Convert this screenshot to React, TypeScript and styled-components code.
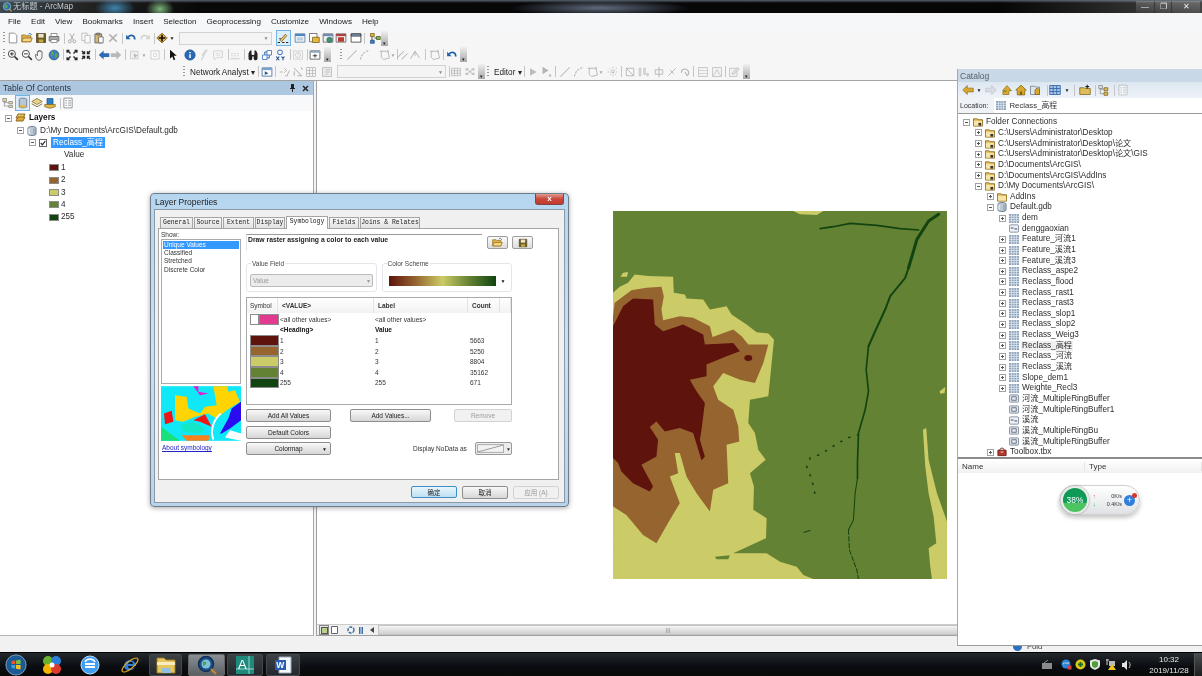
import React from "react";
import styled, { createGlobalStyle } from "styled-components";

const Global = createGlobalStyle`
  html, body { margin: 0; padding: 0; background: #fff; overflow: hidden; }
  * { box-sizing: border-box; }
`;
const SANS = `"Liberation Sans", "Noto Sans CJK SC", sans-serif`;

const Page = styled.div`
  position: relative; width: 1202px; height: 676px; overflow: hidden; display: flex; flex-direction: column;
  font-family: ${SANS}; color: #222; background: #f3f3f3; filter: blur(0.35px);
`;
const TitleBar = styled.div`
  height: 13px; display: flex; align-items: center; padding-left: 2px; gap: 1px; color: #c9ccd0; font-size: 8.2px; line-height: 10px;
  background:
    linear-gradient(180deg, rgba(150,170,190,.55) 0, rgba(0,0,0,0) 3px),
    radial-gradient(ellipse 20px 10px at 115px 8px, rgba(70,150,200,.85), transparent),
    radial-gradient(ellipse 14px 10px at 160px 9px, rgba(150,220,150,.8), transparent),
    radial-gradient(ellipse 90px 8px at 600px 8px, rgba(125,140,165,.75), transparent),
    linear-gradient(90deg, #3a4a50 0, #222 90px, #080808 200px, #060606 1000px, #444 1202px);
`;
const TitleText = styled.span` flex: 1; `;
const WinBtns = styled.div` display: flex; height: 12px; margin-right: 2px; gap: 1px; `;
const WinBtn = styled.div<{ $w: number }>`
  width: ${p => p.$w}px; display: flex; align-items: center; justify-content: center; color: #eee; font-size: 8px;
  background: linear-gradient(180deg, rgba(255,255,255,.22), rgba(255,255,255,.06)); border-radius: 0 0 2px 2px;
`;
const MenuBar = styled.div` height: 17px; display: flex; align-items: center; padding-left: 3px; background: #f6f7f8; font-size: 8.1px; color: #1a1a1a; `;
const Menu = styled.span` padding: 0 5px; `;
const Toolbars = styled.div` height: 51px; background: #f6f6f6; border-bottom: 1px solid #a4a4a4; display: flex; flex-direction: column; `;
const ToolRow = styled.div` height: 16.67px; display: flex; align-items: center; `;
const Cell = styled.div<{ $ml: number; $w: number; $on?: boolean; $off?: boolean }>`
  flex: none; margin-left: ${p => p.$ml}px; width: ${p => p.$w}px; height: 14px;
  display: flex; align-items: center; justify-content: center;
  ${p => p.$on ? "outline: 1px solid #6fb3e6; background: #dcecf9;" : ""}
  ${p => p.$off ? "opacity: .45; filter: grayscale(1);" : ""}
`;
const SepLine = styled.div<{ $ml: number }>` flex: none; margin-left: ${p => p.$ml}px; width: 1px; height: 11px; background: #c5c5c5; `;
const GripBar = styled.div<{ $ml: number }>` flex: none; margin-left: ${p => p.$ml}px; width: 2px; height: 12px; background: repeating-linear-gradient(180deg, #999 0 1px, transparent 1px 3px); `;
const HandleBar = styled.div<{ $ml: number }>`
  flex: none; margin-left: ${p => p.$ml}px; width: 7px; height: 15px; display: flex; align-items: flex-end; justify-content: center;
  background: linear-gradient(180deg, #f0f0f0, #a8a8a8); color: #222; font-size: 5px; line-height: 6px;
`;
const Combo = styled.div<{ $ml: number; $w: number }>`
  flex: none; margin-left: ${p => p.$ml}px; width: ${p => p.$w}px; height: 13px; background: #f4f4f4; border: 1px solid #d2d2d2;
  display: flex; align-items: center; justify-content: flex-end; padding-right: 2px; color: #888; font-size: 5px;
`;
const ToolLabel = styled.div<{ $ml: number; $w: number }>` flex: none; margin-left: ${p => p.$ml}px; width: ${p => p.$w}px; font-size: 8.2px; white-space: nowrap; color: #222; `;
const Caret = styled.div<{ $ml: number; $off?: boolean }>` flex: none; margin-left: ${p => p.$ml}px; width: 6px; font-size: 5px; text-align: center; color: ${p => p.$off ? "#aaa" : "#222"}; `;

const Main = styled.div` height: 555px; display: flex; `;
const Toc = styled.div` width: 314px; display: flex; flex-direction: column; background: #fff; border-right: 1px solid #a9a9a9; border-bottom: 1px solid #b5b5b5; `;
const TocTitle = styled.div` height: 14px; flex: none; display: flex; align-items: center; padding: 0 3px; background: #aec7e1; font-size: 8.5px; color: #2a3440; `;
const TocTitleText = styled.span` flex: 1; `;
const TocIcons = styled.div` display: flex; gap: 6px; margin-right: 1px; align-items: center; `;
const PanelTools = styled.div<{ $bg?: string }>` height: 16px; flex: none; display: flex; align-items: center; background: ${p => p.$bg || "#f7f9fb"}; `;
const TocTree = styled.div` flex: 1; padding-top: 1px; font-size: 8.2px; `;
const TreeRow = styled.div<{ $pl: number; $h: number }>` height: ${p => p.$h}px; line-height: 10px; display: flex; align-items: center; padding-left: ${p => p.$pl}px; white-space: nowrap; color: #2c2c2c; `;
const ExpSlot = styled.span` width: 7px; height: 7px; flex: none; display: flex; margin-right: 3px; `;
const IconSlot = styled.span<{ $w: number }>` width: ${p => p.$w}px; flex: none; display: flex; align-items: center; justify-content: center; margin-right: 3px; `;
const Bold = styled.span` font-weight: 700; color: #111; `;
const Picked = styled.span` background: #3399ff; color: #fff; padding: 0 2px; margin-left: 1px; height: 11px; line-height: 11px; `;
const Soft = styled.span` background: #f0f0f0; padding: 0 1px; margin-left: -1px; `;
const Swatch = styled.span<{ $c: string }>` width: 10px; height: 7px; flex: none; background: ${p => p.$c}; border: 1px solid #8c8c8c; margin-right: 2px; `;

const MapView = styled.div` width: 642px; margin-left: 2px; display: flex; flex-direction: column; background: #fff; border-left: 1px solid #a0a0a0; border-bottom: 1px solid #a0a0a0; `;
const MapCanvas = styled.div` flex: 1; padding: 130px 0 0 296px; `;
const MapBar = styled.div` height: 11px; display: flex; align-items: center; padding-left: 2px; background: #f0f0f0; border-top: 1px solid #ccc; `;
const MapBtn = styled.div<{ $ml?: number; $on?: boolean }>`
  width: 10px; height: 10px; flex: none; margin-left: ${p => p.$ml || 0}px; display: flex; align-items: center; justify-content: center;
  ${p => p.$on ? "border: 1px solid #888; background: #e4e4e4;" : ""}
`;
const ScrollTrack = styled.div` flex: 1; height: 10px; margin-left: 1px; background: linear-gradient(180deg, #f4f4f4, #cfcfcf); border: 1px solid #c4c4c4; display: flex; align-items: center; justify-content: center; color: #888; font-size: 6px; `;
const BottomStrip = styled.div` height: 16px; background: #f1f1f1; `;
const Peek = styled.div` position: absolute; left: 1013px; top: 642px; display: flex; align-items: center; gap: 5px; font-size: 8px; color: #444; line-height: 9px; `;
const PeekDot = styled.span` width: 9px; height: 9px; border-radius: 50%; background: #2a6fc0; `;

const Taskbar = styled.div` height: 24px; display: flex; align-items: center; background: linear-gradient(180deg, #23282d, #0a0c10 60%, #090909); border-top: 1px solid #000; position: relative; `;
const TaskBtn = styled.div<{ $ml: number; $w: number; $on?: boolean }>`
  flex: none; height: 22px; width: ${p => p.$w}px; margin-left: ${p => p.$ml}px; display: flex; align-items: center; justify-content: center; border-radius: 2px;
  ${p => p.$on ? "background: linear-gradient(180deg, #8a9096, #5a5f64); border: 1px solid #666;" : ""}
  &[data-open="1"] { background: linear-gradient(180deg, #3c4146, #24282c); border: 1px solid #44484c; }
`;
const Tray = styled.div` margin-left: auto; display: flex; align-items: center; height: 100%; `;
const TrayIco = styled.div<{ $ml: number }>` margin-left: ${p => p.$ml}px; display: flex; `;
const Clock = styled.div` margin-left: 14px; width: 46px; text-align: center; color: #e8e8e8; font-size: 8px; line-height: 11px; `;
const ShowDesk = styled.div` width: 8px; height: 100%; margin-left: 2px; background: linear-gradient(180deg, #4a4d50, #1c1e20); border-left: 1px solid #555; `;

/* Catalog window */
const Catalog = styled.div` position: absolute; left: 957px; top: 69px; width: 245px; height: 577px; display: flex; flex-direction: column; background: #fff; border-left: 1px solid #a8a8a8; border-bottom: 1px solid #9a9a9a; `;
const CatTitle = styled.div` height: 13px; flex: none; background: #c9d8e7; color: #56606c; font-size: 8.5px; display: flex; align-items: center; padding-left: 2px; `;
const LocRow = styled.div` height: 16px; flex: none; display: flex; align-items: center; background: #eff3f8; font-size: 7px; color: #333; padding-left: 2px; border-bottom: 1px solid #999; `;
const LocInput = styled.div` margin-left: 6px; flex: 1; height: 15px; line-height: 10px; background: #fff; display: flex; align-items: center; gap: 3px; padding-left: 2px; font-size: 7.8px; `;
const CatTree = styled.div` flex: 1; padding-top: 3px; font-size: 8.2px; overflow: hidden; `;
const ResultPane = styled.div` height: 188px; flex: none; border-top: 2px solid #8c8c8c; position: relative; `;
const ResultHead = styled.div` height: 14px; display: grid; grid-template-columns: 127px 1fr; background: linear-gradient(180deg, #fff, #f1f1f1); font-size: 8px; color: #333; align-items: center; `;
const ResultCol = styled.div` padding-left: 4px; border-right: 1px solid #e6e6e6; `;
const Widget = styled.div` position: absolute; left: 101px; top: 26px; width: 81px; height: 30px; display: flex; align-items: center; border-radius: 15px; background: linear-gradient(180deg, #fff, #dfe2e5 ); box-shadow: 0 3px 4px rgba(0,0,0,.22); border: 1px solid #d0d0d0; `;
const Gauge = styled.div`
  width: 28px; height: 28px; margin-left: 1px; flex: none; border-radius: 50%; border: 2px solid #e8ece8; display: flex; align-items: center; justify-content: center;
  color: #fff; font-size: 8.4px; background: linear-gradient(180deg, #0f9a58 0 62%, #4cc45f 62%); box-shadow: 0 0 2px #777;
`;
const Rates = styled.div` flex: 1; display: flex; flex-direction: column; gap: 2px; font-size: 5.4px; color: #333; padding: 0 2px 0 4px; `;
const Rate = styled.div` display: flex; justify-content: space-between; `;
const Arrow = styled.span<{ $c: string }>` color: ${p => p.$c}; font-weight: 700; `;
const PlusBubble = styled.div`
  position: relative; width: 11px; height: 11px; border-radius: 50%; background: #2f7fdc; color: #fff; flex: none; margin-right: 4px; font-size: 9px; line-height: 10px; text-align: center;
  &::after { content: ""; position: absolute; right: -2px; top: -2px; width: 5px; height: 5px; border-radius: 50%; background: #d9352b; }
`;

/* Dialog */
const Dialog = styled.div`
  position: absolute; left: 150px; top: 193px; width: 419px; height: 314px; display: flex; flex-direction: column; padding: 0 3px 3px;
  background: linear-gradient(180deg, #b6d6f0, #c8e0f3 50%, #b9d3ea); border: 1px solid #6d7d8c; border-radius: 4px; box-shadow: 0 1px 5px rgba(0,0,0,.35);
`;
const DlgTitle = styled.div` height: 15px; flex: none; display: flex; align-items: center; font-size: 8.5px; color: #222; justify-content: space-between; padding-left: 1px; `;
const DlgClose = styled.div` width: 29px; height: 11px; margin: -5px 1px 0 0; background: linear-gradient(180deg, #e09c90, #c9453a 50%, #c23b30); border: 1px solid #7d4640; border-top: none; border-radius: 0 0 3px 3px; color: #fff; text-align: center; font-size: 8px; line-height: 10px; font-weight: 700; `;
const Client = styled.div` flex: 1; background: #f0f0f0; border: 1px solid #8d9aa6; padding: 6px 5px 0 3px; display: flex; flex-direction: column; `;
const Tabs = styled.div` height: 13px; flex: none; display: flex; padding-left: 2px; align-items: flex-end; margin-bottom: -1px; position: relative; `;
const Tab = styled.div<{ $w: number; $on?: boolean }>`
  width: ${p => p.$w}px; height: ${p => p.$on ? 13 : 12}px; flex: none; margin-right: 1px; border: 1px solid #a5a5a5; border-bottom: ${p => p.$on ? "none" : "1px solid #a5a5a5"}; background: ${p => p.$on ? "#fff" : "linear-gradient(180deg, #f6f6f6, #e2e2e2)"};
  font: 6.4px/10px "Liberation Mono", monospace; text-align: center; color: #222; white-space: nowrap; ${p => p.$on ? "z-index: 1;" : ""}
`;
const TabPanel = styled.div` height: 252px; flex: none; background: #fff; border: 1px solid #a5a5a5; display: flex; padding: 2px 0 0 2px; font-size: 6.5px; color: #333; `;
const LeftCol = styled.div` width: 80px; flex: none; display: flex; flex-direction: column; `;
const ShowLabel = styled.div` height: 8px; line-height: 8px; `;
const ShowList = styled.div` height: 145px; flex: none; border: 1px solid #aaa; padding: 1px; `;
const ShowItem = styled.div<{ $on?: boolean }>` height: 8.2px; line-height: 8.2px; padding-left: 1px; ${p => p.$on ? "background: #3399ff; color: #fff;" : ""} `;
const Thumb = styled.svg` margin-top: 2px; display: block; `;
const AboutLink = styled.a` margin-top: 3px; margin-left: 1px; color: #2222cc; text-decoration: underline; `;
const RightCol = styled.div` width: 320px; margin-left: 5px; display: flex; flex-direction: column; padding-top: 3px; `;
const HeadRow = styled.div` height: 16px; flex: none; display: flex; `;
const DescBox = styled.div` width: 236px; flex: none; border-top: 1px solid #9a9a9a; border-left: 1px solid #e2e2e2; font-size: 6.8px; font-weight: 700; color: #222; padding: 1px 1px; `;
const SqBtn = styled.div<{ $ml: number }>` width: 21px; height: 13px; margin: 2px 0 0 ${p => p.$ml}px; border: 1px solid #9d9d9d; border-radius: 2px; background: linear-gradient(180deg, #fafafa, #dcdcdc); display: flex; align-items: center; justify-content: center; `;
const Groups = styled.div` display: flex; gap: 5px; margin-top: 13px; height: 29px; width: 266px; `;
const Group = styled.div` position: relative; width: 130.5px; border: 1px solid #e3e6ea; border-radius: 3px; display: flex; align-items: center; padding: 6px 3px 0; `;
const Legend = styled.span` position: absolute; left: 4px; top: -4px; background: #fff; padding: 0 1px; font-size: 6.5px; line-height: 8px; color: #444; `;
const SelectBox = styled.div` flex: 1; height: 13px; border: 1px solid #bbb; border-radius: 2px; background: #ececec; color: #999; display: flex; align-items: center; justify-content: space-between; padding: 0 2px; font-size: 6.4px; `;
const RampBox = styled.div` flex: 1; height: 14px; display: flex; align-items: center; gap: 5px; padding-left: 3px; font-size: 5px; color: #111; `;
const Ramp = styled.div` width: 107px; height: 10px; background: linear-gradient(90deg, #5f130d, #96652f 25%, #cbcb67 50%, #648233 75%, #114410); `;
const Table = styled.div` margin-top: 5px; width: 266px; height: 108px; flex: none; border: 1px solid #aaa; `;
const THead = styled.div` height: 15px; display: grid; grid-template-columns: 31px 96px 94px 32px 1fr; background: linear-gradient(180deg, #fff, #f2f2f2); align-items: center; `;
const Th = styled.div<{ $b?: boolean }>` height: 100%; display: flex; align-items: center; padding-left: ${p => p.$b ? 4 : 3}px; border-right: 1px solid #e4e4e4; font-weight: ${p => p.$b ? 700 : 400}; color: #333; `;
const TBody = styled.div` padding-top: 1px; `;
const TRow = styled.div` height: 10.6px; display: grid; grid-template-columns: 33px 95px 95px 1fr; align-items: center; `;
const SymCell = styled.div` display: flex; padding-left: 3px; height: 100%; `;
const SymSwatch = styled.span<{ $c: string; $w?: number }>` width: ${p => p.$w || 29}px; height: 100%; background: ${p => p.$c}; border: 1px solid #8c8c8c; `;
const BtnRow = styled.div<{ $mt: number }>` display: flex; margin-top: ${p => p.$mt}px; width: 266px; height: 13px; align-items: center; `;
const DlgBtn = styled.div<{ $w: number; $ml?: number; $off?: boolean; $primary?: boolean }>`
  width: ${p => p.$w}px; height: ${p => p.$primary ? 12 : 13}px; margin-left: ${p => p.$ml || 0}px; flex: none; display: flex; align-items: center; justify-content: center; position: relative;
  border: 1px solid ${p => p.$primary ? "#3d8fc9" : p.$off ? "#d2d2d2" : "#8e8e8e"}; border-radius: 2px; font-size: 6.5px;
  color: ${p => p.$off ? "#9a9a9a" : "#222"};
  background: ${p => p.$off ? "#f1f1f1" : p.$primary ? "linear-gradient(180deg, #e8f5fc, #bfe0f3)" : "linear-gradient(180deg, #f8f8f8, #d6d6d6)"};
`;
const BtnCaret = styled.span` position: absolute; right: 3px; font-size: 5px; `;
const NoDataLabel = styled.span` margin-left: 82px; width: 62px; flex: none; `;
const NoDataBox = styled.div` width: 37px; height: 13px; flex: none; border: 1px solid #999; border-radius: 2px; background: #ececec; display: flex; align-items: center; padding-left: 1px; font-size: 5px; gap: 2px; `;
const Footer = styled.div` flex: 1; display: flex; align-items: center; justify-content: flex-end; padding-top: 2px; gap: 5px; font-size: 7.5px; `;

/* ----- glyphs (drawings on a 16 unit grid) ----- */
const S = (c: string, w = 1.3) => ({ stroke: c, strokeWidth: w, fill: "none" as const });
const G: Record<string, React.ReactNode> = {
  new: <path d="M3 1.5h7l3 3v10H3z" fill="#fff" stroke="#777" />,
  open: <><path d="M1 13V4h5l1 1h6v8z" fill="#e3b24a" stroke="#8d6a1e" /><path d="M1 13l2-5h12l-2 5z" fill="#f5d67e" stroke="#8d6a1e" /><path d="M10 3c2-2 3-1 4 1" {...S("#2a6fb8")} /></>,
  save: <><path d="M2 2h12v12H2z" fill="#6e5a1f" stroke="#4c3e14" /><path d="M4.5 2.5h7v5h-7z" fill="#e7e3d0" /><path d="M5 10h6v4H5z" fill="#c8a949" /></>,
  print: <><path d="M4 2h8v4H4z" fill="#fff" stroke="#777" /><path d="M1.5 6h13v6h-13z" fill="#a9a9a9" stroke="#666" /><path d="M4 10h8v4H4z" fill="#fff" stroke="#777" /></>,
  cut: <><circle cx="5" cy="12.5" r="2" {...S("#555")} /><circle cx="11" cy="12.5" r="2" {...S("#555")} /><path d="M6 11l5-9M10 11L5 2" {...S("#555")} /></>,
  copy: <><path d="M2.5 1.5h7v10h-7z" fill="#fff" stroke="#555" /><path d="M6.5 4.5h7v10h-7z" fill="#fff" stroke="#555" /></>,
  paste: <><path d="M2.5 2.5h9v12h-9z" fill="#d8b777" stroke="#555" /><path d="M5 1.5h4v2.5H5z" fill="#aaa" stroke="#555" /><path d="M7.5 6.5h6v8h-6z" fill="#fff" stroke="#555" /></>,
  del: <path d="M3 3l10 10M13 3L3 13" {...S("#555", 2)} />,
  undo: <><path d="M4 7c3-4 9-3 9 3" {...S("#1f5fa8", 2.2)} /><path d="M1.5 3.5v6h6z" fill="#1f5fa8" /></>,
  redo: <><path d="M12 7C9 3 3 4 3 10" {...S("#aaa", 2)} /><path d="M14.5 3.5v6h-6z" fill="#aaa" /></>,
  add: <><path d="M8 1.5L15 8l-7 6.5L1 8z" fill="#e0b44c" stroke="#7a5c18" /><path d="M8 3.5v9M3.5 8h9" {...S("#111", 2.2)} /></>,
  edit: <><path d="M4 11l7-8 2 2-7 8z" fill="#e8c75e" stroke="#7a5c18" /><path d="M1 14h3M7 14h3M12 14h3M3 9h2" {...S("#222", 1.6)} /></>,
  w1: <><path d="M1.5 2.5h13v11h-13z" fill="#fff" stroke="#44688c" /><path d="M1.5 2.5h13v3h-13z" fill="#4b86c3" /><path d="M3.5 8h9M3.5 10.5h9" {...S("#7fa3c7", 1.2)} /></>,
  w2: <><path d="M2 2h10v11H2z" fill="#fff" stroke="#555" /><path d="M6 7h9v7H6z" fill="#e3b83f" stroke="#7a5c18" /></>,
  w3: <><path d="M1.5 2.5h13v11h-13z" fill="#eee" stroke="#555" /><path d="M1.5 2.5h13v3h-13z" fill="#6d8db0" /><circle cx="10" cy="10.5" r="3.5" fill="#3f9a55" stroke="#2a5f9a" /></>,
  w4: <><path d="M1.5 2.5h13v11h-13z" fill="#eee" stroke="#555" /><path d="M1.5 2.5h13v3h-13z" fill="#b04040" /><path d="M4 7h8v6H4z" fill="#b53a32" /></>,
  w5: <><path d="M1.5 2.5h13v11h-13z" fill="#fff" stroke="#333" /><path d="M1.5 2.5h13v3h-13z" fill="#7d9ec2" stroke="#333" /></>,
  model: <><path d="M2 2h5v4H2z" fill="#e4b63a" stroke="#7a5c18" /><path d="M10 6h5v4h-5z" fill="#88b84a" stroke="#44601e" /><path d="M2 11h5v4H2z" fill="#3f7fc4" stroke="#234f80" /><path d="M4 6v5M7 8h3" {...S("#222", 1)} /></>,
  zi: <><circle cx="6.5" cy="6.5" r="4.7" fill="#fff" stroke="#444" strokeWidth="1.3" /><path d="M10 10l4.5 4.5" {...S("#333", 2.2)} /><path d="M4 6.5h5M6.5 4v5" {...S("#222", 1.2)} /></>,
  zo: <><circle cx="6.5" cy="6.5" r="4.7" fill="#fff" stroke="#444" strokeWidth="1.3" /><path d="M10 10l4.5 4.5" {...S("#333", 2.2)} /><path d="M4 6.5h5" {...S("#222", 1.2)} /></>,
  hand: <path d="M4.5 9V4c0-1 1.5-1 1.5 0V2.5c0-1 1.6-1 1.6 0V3c0-1 1.6-1 1.6 0v1c0-1 1.5-1 1.5 0v6c0 3-2 5-4 5s-3-1-4-3L1.8 8.500c-.6-1 .8-1.800 1.500-1z" fill="#f4f4f4" stroke="#444" />,
  globe: <><circle cx="8" cy="8" r="6.5" fill="#3b7dc0" stroke="#28527f" /><path d="M4 4c3-1 4 1 3 3s-3 1-3 3M10 6c2 0 3 2 2 4s-2 2-3 1" fill="#5fa83f" stroke="#5fa83f" /></>,
  fin: <path d="M2 2l4 4M14 2l-4 4M2 14l4-4M14 14l-4-4M1.500 5V2h3M14.500 5V2h-3M1.500 11v3h3M14.500 11v3h-3" {...S("#222", 1.8)} />,
  fout: <path d="M6 6L2.500 2.500M10 6l3.500-3.500M6 10l-3.500 3.500M10 10l3.500 3.500M3 6h3V3M13 6h-3V3M3 10h3v3M13 10h-3v3" {...S("#222", 1.8)} />,
  back: <path d="M1 8l6.500-6v3.500H15v5H7.500V14z" fill="#2c6bb5" />,
  fwd: <path d="M15 8L8.500 2v3.500H1v5h7.500V14z" fill="#b9b9b9" />,
  sel: <><path d="M2 3h10v10H2z" fill="#e9e9e9" stroke="#888" /><path d="M6 6l6 3-3 1-1 3z" fill="#666" /></>,
  clr: <><path d="M2.500 2.500h11v11h-11z" fill="#fff" stroke="#888" /><path d="M6 6h4v4H6z" fill="none" stroke="#aaa" /></>,
  ptr: <path d="M4 1v12l3-3 2 5 2-1-2-5h4z" fill="#111" />,
  info: <><circle cx="8" cy="8" r="6.800" fill="#2a69b8" stroke="#1a4a88" /><path d="M8 4v1.500M8 7v5" {...S("#fff", 2)} /></>,
  bolt: <path d="M11 1L3 15l3-6-2-1 4-6z" fill="#bbb" stroke="#999" />,
  html: <><path d="M2 2.500h12v9H6l-3 3v-3H2z" fill="#f2f2f2" stroke="#999" /><path d="M5 6h6M5 8.500h6" {...S("#bbb", 1)} /></>,
  meas: <path d="M2 13h12M3 6h2M7 6h2M11 6h2M3 9h2M7 9h2M11 9h2" {...S("#999", 1.6)} />,
  bin: <><path d="M2 6l2-4h2v5l1 1h2l1-1V2h2l2 4v6a2.500 2.500 0 0 1-5 1V10H7v3a2.500 2.500 0 0 1-5-1z" fill="#222" /></>,
  goto: <><path d="M2 8h6v6H2z" fill="#fff" stroke="#2a69b8" /><path d="M8 2h6v6H8z" fill="#fff" stroke="#2a69b8" /><path d="M5 8V4h3M11 8v4H8" {...S("#2a69b8", 1.3)} /></>,
  xy: <><circle cx="8" cy="4.500" r="3.200" {...S("#2a69b8", 1.3)} /><path d="M3 10l4 5M7 10l-4 5M10 10l2 2.500 2-2.500M12 12.500V15" {...S("#1f4f8f", 1.4)} /></>,
  time: <><path d="M2 2.500h12v11H2z" {...S("#aaa")} /><circle cx="8" cy="8" r="3.500" {...S("#aaa")} /><path d="M8 5.500V8h2" {...S("#aaa", 1)} /></>,
  view: <><path d="M1.500 2.500h13v11h-13z" fill="#fff" stroke="#444" /><path d="M1.500 2.500h13v2.500h-13z" fill="#8fa8c2" /><path d="M5 9h6M8 6.500v5" {...S("#333", 1.2)} /></>,
  ln: <path d="M2 14L14 2M2 14h1M13 2h1" {...S("#666", 1.4)} />,
  arc: <path d="M2 14C3 7 8 3 14 2" {...S("#666", 1.5)} strokeDasharray="3 1.500" />,
  poly: <path d="M3 3h9l2 9-8 2-3-3zM1 3h4M12 1v4" {...S("#666", 1.2)} />,
  spark: <path d="M8 1v14M1 8h14M3 3l10 10M13 3L3 13" {...S("#666", 1)} strokeDasharray="2 1.500" />,
  dbl: <path d="M1 11L9 3M6 14l8-8" {...S("#666", 1.400)} />,
  ang: <path d="M2 13L8 3l6 9M8 3v6" {...S("#666", 1.300)} />,
  na1: <path d="M1 8h4M7 3l3 3-3 3M11 12l3-6M8 13h4" {...S("#666", 1.300)} />,
  na2: <path d="M3 3l10 10M3 13V7M7 13h6M12 2l2 3" {...S("#666", 1.400)} />,
  na3: <path d="M2 2h12v12H2zM6 2v12M10 2v12M2 6h12M2 10h12" {...S("#666", 1)} />,
  na4: <><path d="M2 2h12v12H2z" fill="#ddd" stroke="#666" /><path d="M6 5h6M6 8h6M6 11h3" {...S("#666", 1)} /></>,
  nar: <><path d="M1.500 2.500h13v11h-13z" fill="#fff" stroke="#2d5d90" /><path d="M1.500 2.500h13v3h-13z" fill="#7aa4cf" /><path d="M5 7v5l5-2.500z" fill="#2d5d90" /></>,
  grid: <path d="M2 3h12v10H2zM6 3v10M10 3v10M2 6.300h12M2 9.600h12" {...S("#666", 1)} />,
  grid2: <path d="M2 3h4v3H2zM6 6h4v3H6zM10 3h4v3h-4zM2 9h4v3H2zM10 9h4v3h-4z" fill="#888" />,
  rect1: <path d="M3 3v10h10zM3 3h10v10" {...S("#666", 1.200)} />,
  sq: <path d="M3 3h2v10H3zM9 3h2v8H9zM13 10h2v3h-2z" {...S("#666", 1)} />,
  cross: <path d="M8 1v14M3 5h10v6H3z" {...S("#666", 1.200)} />,
  xx: <path d="M3 13L13 3M5 5l6 6" {...S("#666", 1.200)} />,
  rot: <path d="M3 9a5 5 0 1 1 8 4M8 8l3 5" {...S("#666", 1.500)} />,
  tbl: <><path d="M2 2h12v12H2z" fill="#eee" stroke="#777" /><path d="M2 6h12M2 10h12" {...S("#999", 1)} /></>,
  img: <><path d="M2 2h12v12H2z" fill="#eee" stroke="#777" /><path d="M3 13l5-8 5 8" {...S("#777", 1)} /></>,
  sk: <><path d="M2 3h10v11H2z" fill="#eee" stroke="#777" /><path d="M5 10l8-8 2 2-8 8z" fill="#ccc" stroke="#777" /></>,
  play: <path d="M4 3l9 5-9 5z" fill="#777" />,
  playa: <><path d="M2 1l8 5-8 5z" fill="#666" /><path d="M10 14l2-4 2 4z" fill="#666" /></>,
  tree: <><path d="M1 2h5v4H1z" fill="#ddd" stroke="#888" /><path d="M8 5h5v4H8z" fill="#e0bd5c" stroke="#7a5c18" /><path d="M8 11h5v4H8z" fill="#e0bd5c" stroke="#7a5c18" /><path d="M3 6v7h5M3 7h5" {...S("#888", 1)} /></>,
  dbpage: <><path d="M3 3c0-2 10-2 10 0v10c0 2-10 2-10 0z" fill="#b8c6d6" stroke="#5a6a7a" /><path d="M4 11h8v3H4z" fill="#e3b83f" /></>,
  lyrs: <><path d="M8 2l7 4-7 4-7-4z" fill="#e8d48a" stroke="#7d6a2a" /><path d="M1 9l7 4 7-4" {...S("#7d6a2a", 1.200)} /></>,
  srcs: <><path d="M4 2h8v8H4z" fill="#2f7fc0" stroke="#1d5a8c" /><path d="M1 10h14v3l-7 2-7-2z" fill="#e3b83f" stroke="#7d6a2a" /></>,
  listt: <><path d="M2.500 1.500h11v13h-11z" fill="#fff" stroke="#777" /><path d="M4.500 5h2M8 5h4M4.500 8h2M8 8h4M4.500 11h2M8 11h4" {...S("#888", 1.100)} /></>,
  tocl: <><path d="M1 2h5v4H1z" fill="#e8d48a" stroke="#888" /><path d="M9 6h5v3H9z" fill="#e8d48a" stroke="#888" /><path d="M9 11h5v3H9z" fill="#e8d48a" stroke="#888" /><path d="M3 6v6h6M3 7.500h6" {...S("#888", 1)} /></>,
  yback: <path d="M1 8l6-6v3.500h8v5H7V14z" fill="#d8a92c" stroke="#7d6214" strokeWidth=".8" />,
  yfwd: <path d="M15 8L9 2v3.500H1v5h8V14z" fill="#ccc" stroke="#888" strokeWidth=".8" />,
  yup: <path d="M8 2l6 7h-3.500v5h-8V10H7V9H2z" fill="#d8a92c" stroke="#7d6214" strokeWidth=".8" />,
  home: <><path d="M8 1.500L15 8h-2v6.500H3V8H1z" fill="#d8a92c" stroke="#7d6214" /><path d="M6.500 10h3v4.500h-3z" fill="#7d6214" /></>,
  hfold: <><path d="M2 3h6l1 1h5v10H2z" fill="#dde4ec" stroke="#6c7a8a" /><path d="M8 8l3-3 3 3v6H8z" fill="#d8a92c" stroke="#7d6214" /></>,
  bgrid: <path d="M1 2h14v12H1zM5.600 2v12M10.300 2v12M1 6h14M1 10h14" fill="#a9c4e4" stroke="#2c64a8" strokeWidth="1.100" />,
  fadd: <><path d="M1 5h6l1 1h7v8H1z" fill="#e0bd5c" stroke="#7d6214" /><path d="M11 1v5M8.500 3.500h5" {...S("#222", 1.400)} /></>,
};
const Glyph = ({ n, s = 12 }: { n: string; s?: number }) => <svg width={s} height={s} viewBox="0 0 16 16">{G[n]}</svg>;

type It = { x: number; n?: string; off?: boolean; on?: boolean; k?: "sep" | "grip" | "handle" | "caret" | "combo" | "label"; w?: number; t?: string; };
const W: Record<string, number> = { sep: 1, grip: 2, handle: 7, caret: 6 };
const Placed = ({ items }: { items: It[] }) => {
  let prev = 0;
  return <>{items.map((it, i) => {
    const w = it.w ?? (it.k ? W[it.k] : 13);
    const left = it.x - w / 2;
    const ml = +(left - prev).toFixed(2);
    prev = left + w;
    if (it.k === "sep") return <SepLine key={i} $ml={ml} />;
    if (it.k === "grip") return <GripBar key={i} $ml={ml} />;
    if (it.k === "handle") return <HandleBar key={i} $ml={ml}>▾</HandleBar>;
    if (it.k === "caret") return <Caret key={i} $ml={ml} $off={it.off}>▼</Caret>;
    if (it.k === "combo") return <Combo key={i} $ml={ml} $w={w}>▼</Combo>;
    if (it.k === "label") return <ToolLabel key={i} $ml={ml} $w={w}>{it.t}</ToolLabel>;
    return <Cell key={i} $ml={ml} $w={w} $on={it.on} $off={it.off}><Glyph n={it.n!} /></Cell>;
  })}</>;
};
const sep = (x: number): It => ({ x, k: "sep" });
const grip = (x: number): It => ({ x, k: "grip" });
const hdl = (x: number): It => ({ x, k: "handle" });
const car = (x: number, off?: boolean): It => ({ x, k: "caret", off });
const on = (x: number, n: string): It => ({ x, n });
const of = (x: number, n: string): It => ({ x, n, off: true });

const ROW1: It[] = [grip(4), on(13, "new"), on(27, "open"), on(41, "save"), on(54, "print"), sep(64), of(72, "cut"), of(86, "copy"), on(99, "paste"), of(113, "del"), sep(122), on(131, "undo"), of(145, "redo"), sep(154), on(162, "add"), car(172), { x: 225, k: "combo", w: 93 }, { x: 283, n: "edit", on: true }, on(300, "w1"), on(314, "w2"), on(328, "w3"), on(341, "w4"), on(356, "w5"), sep(364), on(375, "model"), hdl(384.5)];
const ROW2: It[] = [grip(4), on(13, "zi"), on(27, "zo"), on(40, "hand"), on(54, "globe"), sep(63), on(72, "fin"), on(86, "fout"), sep(95), on(104, "back"), on(116, "fwd"), sep(125), of(135, "sel"), car(144, true), of(155, "clr"), sep(164), on(173, "ptr"), on(190, "info"), of(205, "bolt"), of(218, "html"), sep(228), of(235, "meas"), sep(244), on(253, "bin"), on(267, "goto"), on(280, "xy"), sep(290), of(298, "time"), sep(307), on(315, "view"), hdl(327), grip(341), of(352, "ln"), of(365, "arc"), of(385, "poly"), car(393, true), sep(397), of(403, "dbl"), of(415, "ang"), sep(425), of(435, "poly"), sep(443), on(452, "undo"), hdl(463.5)];
const ROW3: It[] = [grip(184), { x: 223, k: "label", w: 66, t: "Network Analyst ▾" }, sep(258), on(266.5, "nar"), sep(275), of(285, "na1"), of(298, "na2"), of(311, "na3"), of(327, "na4"), { x: 391.5, k: "combo", w: 109 }, sep(449), of(456, "grid"), of(470, "grid2"), hdl(481), grip(488), { x: 508, k: "label", w: 28, t: "Editor ▾" }, sep(524), of(533, "play"), of(547, "playa"), sep(555), of(565, "ln"), of(579, "arc"), of(593, "poly"), car(601, true), of(613, "spark"), sep(621), of(630, "rect1"), of(643, "sq"), of(659, "cross"), of(672, "xx"), of(685, "rot"), sep(693), of(703, "tbl"), of(717, "img"), sep(725), of(734, "sk"), hdl(746)];

const Exp = ({ plus }: { plus?: boolean }) => (
  <svg width="7" height="7" viewBox="0 0 7 7"><rect x=".5" y=".5" width="6" height="6" fill="#fff" stroke="#a3a3a3" /><path d={plus ? "M2 3.500h3M3.500 2v3" : "M2 3.500h3"} stroke="#555" strokeWidth="1" /></svg>
);
const T = {
  conn: <svg width="11" height="10" viewBox="0 0 11 10"><path d="M.5 1.500h4l1 1h5v7H.5z" fill="#e9c46a" stroke="#8d6a1e" /><path d="M1 4h9v5H1z" fill="#f7e5a8" /><path d="M6 6h3v3H6z" fill="#333" /></svg>,
  folder: <svg width="11" height="10" viewBox="0 0 11 10"><path d="M.5 1.500h4l1 1h5v7H.5z" fill="#e9c46a" stroke="#8d6a1e" /><path d="M1 4h9v5H1z" fill="#f7e5a8" /></svg>,
  db: <svg width="10" height="10" viewBox="0 0 10 10"><path d="M1 2c0-2 8-2 8 0v6c0 2-8 2-8 0z" fill="#bcc9d6" stroke="#6b7b8b" /><path d="M2 2.500v5.500" stroke="#fff" /><path d="M7 2.500v6" stroke="#8494a5" /></svg>,
  raster: <svg width="10" height="9" viewBox="0 0 10 9"><rect width="10" height="9" fill="#8fa4bd" /><path d="M2.500 0v9M5 0v9M7.500 0v9M0 2.250h10M0 4.500h10M0 6.750h10" stroke="#e4ebf2" strokeWidth=".7" /></svg>,
  line: <svg width="11" height="9" viewBox="0 0 11 9"><rect x=".5" y=".5" width="10" height="8" rx="1" fill="#eef2f6" stroke="#7a8ca0" /><path d="M2 4h3M6 5h3" stroke="#334" strokeWidth="1" /></svg>,
  poly: <svg width="11" height="9" viewBox="0 0 11 9"><rect x=".5" y=".5" width="10" height="8" rx="1" fill="#dfe6ee" stroke="#7a8ca0" /><path d="M3 2.500h5v4H3z" fill="none" stroke="#556" strokeWidth=".8" /></svg>,
  tbx: <svg width="11" height="10" viewBox="0 0 11 10"><path d="M1 3h9v6H1z" fill="#b8352c" stroke="#6c1c16" /><path d="M3 3c0-3 5-3 5 0" fill="none" stroke="#6c1c16" /><path d="M4 5h3" stroke="#eee" /></svg>,
  lyrs: <svg width="11" height="10" viewBox="0 0 11 10"><path d="M3 1h7L8 5H1z" fill="#e9c46a" stroke="#8d6a1e" /><path d="M3 4h7L8 8H1z" fill="#e2a83d" stroke="#8d6a1e" /></svg>,
  check: <svg width="8" height="8" viewBox="0 0 8 8"><rect x=".5" y=".5" width="7" height="7" fill="#fff" stroke="#666" /><path d="M1.800 4l1.600 1.800L6.300 2" fill="none" stroke="#222" strokeWidth="1.200" /></svg>,
};

type C = { l: number; ic: keyof typeof T; t: string; e?: "p" | "m"; soft?: boolean };
const rs = (t: string, soft?: boolean): C => ({ l: 3, ic: "raster", t, e: "p", soft });
const CAT: C[] = [
  { l: 0, ic: "conn", t: "Folder Connections", e: "m" },
  { l: 1, ic: "conn", t: "C:\\Users\\Administrator\\Desktop", e: "p" },
  { l: 1, ic: "conn", t: "C:\\Users\\Administrator\\Desktop\\论文", e: "p" },
  { l: 1, ic: "conn", t: "C:\\Users\\Administrator\\Desktop\\论文\\GIS", e: "p" },
  { l: 1, ic: "conn", t: "D:\\Documents\\ArcGIS\\", e: "p" },
  { l: 1, ic: "conn", t: "D:\\Documents\\ArcGIS\\AddIns", e: "p" },
  { l: 1, ic: "conn", t: "D:\\My Documents\\ArcGIS\\", e: "m" },
  { l: 2, ic: "folder", t: "AddIns", e: "p" },
  { l: 2, ic: "db", t: "Default.gdb", e: "m" },
  rs("dem"),
  { l: 3, ic: "line", t: "denggaoxian" },
  rs("Feature_河流1"), rs("Feature_溪流1"), rs("Feature_溪流3"), rs("Reclass_aspe2"), rs("Reclass_flood"), rs("Reclass_rast1"), rs("Reclass_rast3"),
  rs("Reclass_slop1"), rs("Reclass_slop2"), rs("Reclass_Weig3"), rs("Reclass_高程", true), rs("Reclass_河流"), rs("Reclass_溪流"), rs("Slope_dem1"), rs("Weighte_Recl3"),
  { l: 3, ic: "poly", t: "河流_MultipleRingBuffer" },
  { l: 3, ic: "poly", t: "河流_MultipleRingBuffer1" },
  { l: 3, ic: "line", t: "溪流" },
  { l: 3, ic: "poly", t: "溪流_MultipleRingBu" },
  { l: 3, ic: "poly", t: "溪流_MultipleRingBuffer" },
  { l: 2, ic: "tbx", t: "Toolbox.tbx", e: "p" },
];

const COLORS = [["#5f130d", "1", "5663"], ["#96652f", "2", "5250"], ["#cbcb67", "3", "8804"], ["#648233", "4", "35162"], ["#114410", "255", "671"]];

const TerrainMap = () => (
  <svg width="334" height="368" viewBox="40 35 1000 1102" style={{ display: "block" }}>
    <rect x="40" y="35" width="1000" height="1102" fill="#648233" />
    <path fill="#cbcb67" d="M40 280L60 262 85 250 105 225 145 230 220 232 222 280 255 285 260 297 310 300 330 330 380 320 395 345 440 375 470 398 505 402 522 420 515 490 505 590 450 600 445 670 465 700 475 750 497 780 450 820 462 860 460 930 500 955 498 1015 400 1060 500 1060 540 1085 590 1100 610 1125 640 1137 40 1137Z" />
    <path fill="#cbcb67" d="M968 690L978 685 985 780 1010 880 1040 965 1040 1137 995 1137 990 1100 985 1045 1008 1030 1000 950 985 880 975 800ZM1018 575L1035 562 1033 580 1020 582ZM580 35H670L650 47 600 45ZM70 220L85 218 82 232 62 232Z" />
    <path fill="#96652f" d="M40 350L45 310 95 272 140 265 185 262 192 290 185 330 190 362 240 350 280 355 330 380 338 412 400 390 425 410 445 435 505 435 490 490 465 550 420 540 370 520 340 560 355 600 400 630 415 680 418 725 380 735 385 850 340 870 330 935 290 880 260 830 240 760 225 760 235 820 210 830 240 910 210 960 170 1030 130 1005 80 945 40 920Z" />
    <path fill="#5f130d" d="M40 380L70 320 100 297 160 300 165 375 190 395 250 375 310 405 315 435 400 430 420 455 380 470 320 495 320 530 270 540 290 575 315 610 305 690 300 720 315 770 305 782 280 700 240 685 195 695 170 665 150 682 175 720 170 770 125 795 160 860 150 875 100 850 65 815 55 790 40 775Z" />
    <ellipse cx="445" cy="475" rx="12" ry="9" fill="#5f130d" />
    <path fill="#648233" d="M345 1070L390 1066 385 1078 350 1078Z" />
    <g fill="none" stroke="#114410" strokeLinecap="round">
      <path strokeWidth="9" d="M1015 45L985 65 950 120 925 205" />
      <path strokeWidth="6" d="M925 205L915 235 870 290 855 330 825 395 805 440" />
      <path strokeWidth="5" d="M805 440L798 510 805 575 795 630 775 700 772 790 772 835" />
      <path strokeWidth="3" d="M772 835L765 880 760 960 745 990" />
      <path strokeWidth="3" strokeDasharray="14 6" d="M745 990L748 1050 770 1110 775 1137" />
      <path strokeWidth="5" d="M660 88L700 82 750 72 830 78 900 88 955 92" />
      <path strokeWidth="5" strokeDasharray="3 24" d="M775 705L740 715 690 745 665 762 630 775 620 800 630 825 640 858 645 885" />
      <path strokeWidth="3" d="M612 997L630 992" />
    </g>
  </svg>
);

const ThumbArt = () => (
  <Thumb width="80" height="55" viewBox="33 108 240 164">
    <rect x="33" y="108" width="240" height="164" fill="#10e8f8" />
    <path d="M33 230L90 272H33Z" fill="#19e07a" />
    <path d="M90 225L130 215 165 235 150 250 100 245Z" fill="#14e6c8" />
    <path d="M75 135L110 140 115 175 150 190 165 170 200 165 190 108H232L235 125 255 120 270 155 230 180 200 205 175 190 135 200 100 215 75 210 75 170Z" fill="#ffd400" />
    <path d="M130 108L150 135 175 130 145 125 145 108Z" fill="#f013d0" />
    <path d="M42 190L65 182 70 215 45 222Z" fill="#f01414" />
    <path d="M130 210L165 192 185 230 150 215Z" fill="#f01414" />
    <path d="M210 250L235 205 245 175 273 155V210L240 235 215 250Z" fill="#2a0cf0" />
    <path d="M190 268C180 240 190 210 212 190" fill="none" stroke="#fff" strokeWidth="6" />
    <path d="M240 240L225 262 273 272V250Z" fill="#fff" />
    <path d="M95 255L180 255 175 272 110 272Z" fill="#f5821e" />
  </Thumb>
);

export default function App() {
  return (
    <Page>
      <Global />
      <TitleBar>
        <svg width="10" height="10" viewBox="0 0 16 16"><circle cx="8" cy="7" r="6" fill="#2e6da8" stroke="#b9d0e0" /><path d="M4 5c3-2 6 0 5 3s-3 1-5 2" fill="#58a860" /><path d="M12 11l3 4" stroke="#caa24a" strokeWidth="2" /></svg>
        <TitleText>无标题 - ArcMap</TitleText>
        <WinBtns>
          <WinBtn $w={18}>—</WinBtn><WinBtn $w={16}>❐</WinBtn><WinBtn $w={28}>✕</WinBtn>
        </WinBtns>
      </TitleBar>
      <MenuBar>
        {["File", "Edit", "View", "Bookmarks", "Insert", "Selection", "Geoprocessing", "Customize", "Windows", "Help"].map(m => <Menu key={m}>{m}</Menu>)}
      </MenuBar>
      <Toolbars>
        <ToolRow><Placed items={ROW1} /></ToolRow>
        <ToolRow><Placed items={ROW2} /></ToolRow>
        <ToolRow><Placed items={ROW3} /></ToolRow>
      </Toolbars>
      <Main>
        <Toc>
          <TocTitle>
            <TocTitleText>Table Of Contents</TocTitleText>
            <TocIcons>
              <svg width="7" height="8" viewBox="0 0 7 8"><path d="M2 0h3v4h1v1H4v3H3V5H1V4h1z" fill="#222" /></svg>
              <svg width="7" height="7" viewBox="0 0 7 7"><path d="M1 1l5 5M6 1L1 6" stroke="#222" strokeWidth="1.400" /></svg>
            </TocIcons>
          </TocTitle>
          <PanelTools>
            <Placed items={[on(8, "tocl"), { x: 22.500, n: "dbpage", on: true }, on(36.500, "lyrs"), on(50, "srcs"), sep(60), on(68, "listt")]} />
          </PanelTools>
          <TocTree>
            <TreeRow $pl={5} $h={12.400}><ExpSlot><Exp /></ExpSlot><IconSlot $w={11}>{T.lyrs}</IconSlot><Bold>Layers</Bold></TreeRow>
            <TreeRow $pl={17} $h={12.400}><ExpSlot><Exp /></ExpSlot><IconSlot $w={10}>{T.db}</IconSlot>D:\My Documents\ArcGIS\Default.gdb</TreeRow>
            <TreeRow $pl={29} $h={12.400}><ExpSlot><Exp /></ExpSlot><IconSlot $w={8}>{T.check}</IconSlot><Picked>Reclass_高程</Picked></TreeRow>
            <TreeRow $pl={64} $h={12.400}>Value</TreeRow>
            {COLORS.map(c => <TreeRow key={c[1]} $pl={49} $h={12.400}><Swatch $c={c[0]} />{c[1]}</TreeRow>)}
          </TocTree>
        </Toc>
        <MapView>
          <MapCanvas><TerrainMap /></MapCanvas>
          <MapBar>
            <MapBtn $on><svg width="7" height="7" viewBox="0 0 7 7"><rect x=".5" y=".5" width="6" height="6" fill="#b9d28a" stroke="#555" /></svg></MapBtn>
            <MapBtn><svg width="7" height="8" viewBox="0 0 7 8"><path d="M.5.500h6v7h-6z" fill="#fff" stroke="#666" /></svg></MapBtn>
            <MapBtn $ml={7}><svg width="8" height="8" viewBox="0 0 8 8"><circle cx="4" cy="4" r="3" fill="none" stroke="#3a6ea5" strokeWidth="1.400" strokeDasharray="3 1" /></svg></MapBtn>
            <MapBtn><svg width="6" height="7" viewBox="0 0 6 7"><path d="M1 0h1.500v7H1zM3.500 0H5v7H3.500z" fill="#3a6ea5" /></svg></MapBtn>
            <MapBtn $ml={1}><svg width="5" height="6" viewBox="0 0 5 6"><path d="M4 0v6L0 3z" fill="#444" /></svg></MapBtn>
            <ScrollTrack>|||</ScrollTrack>
          </MapBar>
        </MapView>
      </Main>
      <BottomStrip />
      <Peek><PeekDot />Fold</Peek>
      <Taskbar>
        <TaskBtn $ml={4} $w={24}>
          <svg width="24" height="22" viewBox="0 0 24 24"><circle cx="12" cy="12" r="11" fill="#1c5a96" stroke="#7fa8c8" /><path d="M7 8l4-1v4H7z" fill="#e8562a" /><path d="M12 7l5-1v5h-5z" fill="#7cbc3c" /><path d="M7 12h4v4l-4-1z" fill="#3aa0e0" /><path d="M12 12h5v5l-5-1z" fill="#f4c020" /></svg>
        </TaskBtn>
        <TaskBtn $ml={13} $w={22}>
          <svg width="20" height="20" viewBox="0 0 20 20"><circle cx="6" cy="6" r="5" fill="#6ab42c" /><circle cx="14" cy="6" r="5" fill="#2e7fd8" /><circle cx="6" cy="14" r="5" fill="#f4b400" /><circle cx="14" cy="14" r="5" fill="#e03a2e" /><circle cx="10" cy="10" r="2.500" fill="#fff" /></svg>
        </TaskBtn>
        <TaskBtn $ml={16} $w={22}>
          <svg width="20" height="20" viewBox="0 0 20 20"><circle cx="10" cy="10" r="9" fill="#3f9ef2" stroke="#bfe0ff" /><path d="M5 9h10M5 12h10" stroke="#fff" strokeWidth="2" /><path d="M5 7c2-4 8-4 10 0" fill="none" stroke="#fff" strokeWidth="1.500" /></svg>
        </TaskBtn>
        <TaskBtn $ml={18} $w={22}>
          <svg width="20" height="20" viewBox="0 0 20 20"><path d="M4 11a6 6 0 0 1 12 0H8c0 3 4 4 7 1-2 5-11 4-11-1zM8 9h5c0-3-4-3-5 0z" fill="#2b7fd4" /><ellipse cx="10" cy="10" rx="10" ry="3.500" transform="rotate(-40 10 10)" fill="none" stroke="#d9a62a" strokeWidth="1.200" /></svg>
        </TaskBtn>
        <TaskBtn $ml={8} $w={33} data-open="1">
          <svg width="20" height="18" viewBox="0 0 20 18"><path d="M1 2h7l2 2h9v13H1z" fill="#e7c65f" stroke="#9a7b22" /><path d="M1 6h18v3H1z" fill="#f8edbf" /><path d="M6 12h8l1 5H5z" fill="#8cc0e4" /></svg>
        </TaskBtn>
        <TaskBtn $ml={6} $w={37} $on>
          <svg width="20" height="20" viewBox="0 0 20 20"><circle cx="9" cy="9" r="7.500" fill="#1c4f84" stroke="#0f2f55" strokeWidth="1.500" /><circle cx="9" cy="9" r="4.500" fill="#7fc2d8" /><path d="M6 7c2-1 4 0 3 2s-3 1-3 2" fill="#4f9f55" /><path d="M14 14l5 5" stroke="#c9862a" strokeWidth="2.200" /></svg>
        </TaskBtn>
        <TaskBtn $ml={2} $w={36} data-open="1">
          <svg width="20" height="20" viewBox="0 0 20 20"><rect x="1" y="1" width="18" height="18" fill="#1d8a7c" /><path d="M1 14h18M14 1v18" stroke="#bde8e0" strokeWidth=".8" /><text x="3" y="14" fontSize="13" fill="#fff" fontFamily="Liberation Sans">A</text></svg>
        </TaskBtn>
        <TaskBtn $ml={3} $w={34} data-open="1">
          <svg width="20" height="20" viewBox="0 0 20 20"><path d="M6 2h12v16H6z" fill="#f4f8fc" stroke="#9ab" /><path d="M2 5h11v10H2z" fill="#2a5cb0" /><text x="3.200" y="13" fontSize="8.500" fontWeight="700" fill="#fff" fontFamily="Liberation Sans">W</text></svg>
        </TaskBtn>
        <Tray>
          <TrayIco $ml={0}><svg width="12" height="10" viewBox="0 0 12 10"><rect x="1" y="3" width="10" height="6" fill="#8a8a8a" /><path d="M3 3l4-3" stroke="#8a8a8a" /></svg></TrayIco>
          <TrayIco $ml={8}><svg width="11" height="11" viewBox="0 0 11 11"><circle cx="5" cy="5" r="4.500" fill="#2b88d8" /><path d="M2 5c2-2 4 0 6-1" stroke="#cfe8ff" /><rect x="6.500" y="6.500" width="4" height="4" fill="#d84040" /></svg></TrayIco>
          <TrayIco $ml={3}><svg width="11" height="11" viewBox="0 0 11 11"><circle cx="5.500" cy="5.500" r="5" fill="#d8c818" /><path d="M3 5.500h5M5.500 3v5" stroke="#1d6a2a" strokeWidth="1.800" /></svg></TrayIco>
          <TrayIco $ml={4}><svg width="10" height="11" viewBox="0 0 10 11"><path d="M5 0l5 1.500V6c0 3-3 4-5 5-2-1-5-2-5-5V1.500z" fill="#e6e6e6" /><path d="M5 2l3 1v3c0 1.500-1.500 2.500-3 3-1.500-.5-3-1.500-3-3V3z" fill="#4e9e3a" /></svg></TrayIco>
          <TrayIco $ml={6}><svg width="10" height="11" viewBox="0 0 10 11"><path d="M1 0v6M0 1h3" stroke="#ccc" /><rect x="3" y="2" width="6" height="5" fill="#bbb" /><path d="M6 5l4 6H2z" fill="#f0c420" /></svg></TrayIco>
          <TrayIco $ml={6}><svg width="10" height="10" viewBox="0 0 10 10"><path d="M0 3h2l3-3v10L2 7H0z" fill="#e4e4e4" /><path d="M7 2c1.500 2 1.500 4 0 6" fill="none" stroke="#bbb" /></svg></TrayIco>
          <Clock>10:32<br />2019/11/28</Clock>
          <ShowDesk />
        </Tray>
      </Taskbar>

      <Catalog>
        <CatTitle>Catalog</CatTitle>
        <PanelTools $bg="linear-gradient(180deg, #dde7f1, #eef3f8)">
          <Placed items={[on(10, "yback"), car(21), of(33, "yfwd"), on(49, "yup"), on(63, "home"), on(77, "hfold"), sep(89), on(97, "bgrid"), car(109), sep(116), on(127, "fadd"), sep(137), on(146, "tree"), sep(156), of(165, "listt")]} />
        </PanelTools>
        <LocRow>
          Location:
          <LocInput>{T.raster}Reclass_高程</LocInput>
        </LocRow>
        <CatTree>
          {CAT.map(c => (
            <TreeRow key={c.t + c.l} $pl={5 + 12 * c.l} $h={10.650}>
              <ExpSlot>{c.e && <Exp plus={c.e === "p"} />}</ExpSlot>
              <IconSlot $w={10}>{T[c.ic]}</IconSlot>
              {c.soft ? <Soft>{c.t}</Soft> : c.t}
            </TreeRow>
          ))}
        </CatTree>
        <ResultPane>
          <ResultHead><ResultCol>Name</ResultCol><ResultCol>Type</ResultCol></ResultHead>
          <Widget>
            <Gauge>38%</Gauge>
            <Rates>
              <Rate><Arrow $c="#e0452e">↑</Arrow>0K/s</Rate>
              <Rate><Arrow $c="#1d9a4a">↓</Arrow>0.4K/s</Rate>
            </Rates>
            <PlusBubble>+</PlusBubble>
          </Widget>
        </ResultPane>
      </Catalog>

      <Dialog>
        <DlgTitle>Layer Properties<DlgClose>x</DlgClose></DlgTitle>
        <Client>
          <Tabs>
            <Tab $w={33}>General</Tab><Tab $w={28}>Source</Tab><Tab $w={31}>Extent</Tab><Tab $w={30}>Display</Tab>
            <Tab $w={42} $on>Symbology</Tab><Tab $w={30}>Fields</Tab><Tab $w={60}>Joins &amp; Relates</Tab>
          </Tabs>
          <TabPanel>
            <LeftCol>
              <ShowLabel>Show:</ShowLabel>
              <ShowList>
                <ShowItem $on>Unique Values</ShowItem>
                <ShowItem>Classified</ShowItem>
                <ShowItem>Stretched</ShowItem>
                <ShowItem>Discrete Color</ShowItem>
              </ShowList>
              <ThumbArt />
              <AboutLink>About symbology</AboutLink>
            </LeftCol>
            <RightCol>
              <HeadRow>
                <DescBox>Draw raster assigning a color to each value</DescBox>
                <SqBtn $ml={5}><Glyph n="open" s={11} /></SqBtn>
                <SqBtn $ml={4}><Glyph n="save" s={10} /></SqBtn>
              </HeadRow>
              <Groups>
                <Group><Legend>Value Field</Legend><SelectBox>Value<span>▾</span></SelectBox></Group>
                <Group><Legend>Color Scheme</Legend><RampBox><Ramp />▼</RampBox></Group>
              </Groups>
              <Table>
                <THead>
                  <Th>Symbol</Th><Th $b>&lt;VALUE&gt;</Th><Th $b>Label</Th><Th $b>Count</Th><Th />
                </THead>
                <TBody>
                  <TRow>
                    <SymCell><SymSwatch $c="#fff" $w={9} /><SymSwatch $c="#e23a8e" $w={20} /></SymCell>
                    <span>&lt;all other values&gt;</span><span>&lt;all other values&gt;</span><span />
                  </TRow>
                  <TRow><span /><Bold>&lt;Heading&gt;</Bold><Bold>Value</Bold><span /></TRow>
                  {COLORS.map(c => (
                    <TRow key={c[1]}><SymCell><SymSwatch $c={c[0]} /></SymCell><span>{c[1]}</span><span>{c[1]}</span><span>{c[2]}</span></TRow>
                  ))}
                </TBody>
              </Table>
              <BtnRow $mt={4}>
                <DlgBtn $w={85}>Add All Values</DlgBtn>
                <DlgBtn $w={81} $ml={19}>Add Values...</DlgBtn>
                <DlgBtn $w={58} $ml={23} $off>Remove</DlgBtn>
              </BtnRow>
              <BtnRow $mt={4}><DlgBtn $w={85}>Default Colors</DlgBtn></BtnRow>
              <BtnRow $mt={3}>
                <DlgBtn $w={85}>Colormap<BtnCaret>▼</BtnCaret></DlgBtn>
                <NoDataLabel>Display NoData as</NoDataLabel>
                <NoDataBox><svg width="28" height="9" viewBox="0 0 28 9"><rect x=".5" y=".5" width="27" height="8" fill="#f2f2f2" stroke="#aaa" /><path d="M1 8L27 1" stroke="#999" /></svg>▼</NoDataBox>
              </BtnRow>
            </RightCol>
          </TabPanel>
          <Footer>
            <DlgBtn $w={46} $primary>确定</DlgBtn>
            <DlgBtn $w={46}>取消</DlgBtn>
            <DlgBtn $w={46} $off>应用 (A)</DlgBtn>
          </Footer>
        </Client>
      </Dialog>
    </Page>
  );
}
